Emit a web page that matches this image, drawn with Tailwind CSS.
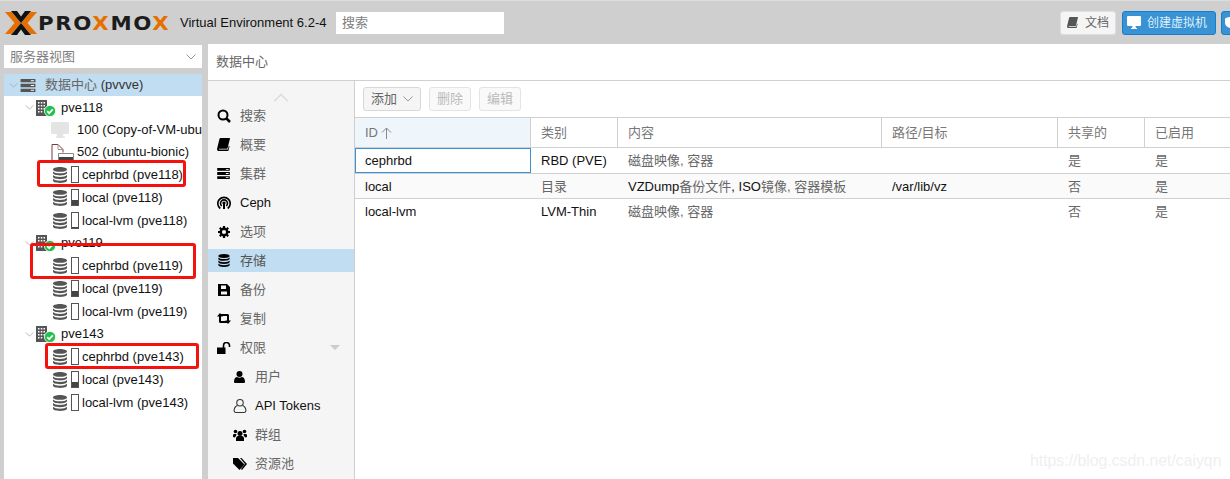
<!DOCTYPE html>
<html lang="zh">
<head>
    <meta charset="UTF-8">
    <title>Proxmox VE</title>
    <script src="https://cdn.jsdelivr.net/npm/@tailwindcss/browser@4"></script>
</head>
<body class="w-[1230px] h-[479px] overflow-hidden relative bg-[#cfcfcf] text-[13px] leading-[16px] text-[#111] font-['Liberation_Sans','Noto_Sans_CJK_SC',sans-serif]">
    <!-- icon sprites -->
    <svg class="hidden">
        <symbol id="db" viewBox="0 0 14 16"><path d="M7 0C3 0 0 1 0 2.400S3 4.800 7 4.800s7-1 7-2.400S11 0 7 0zM0 4.400V6c0 1.400 3 2.400 7 2.400s7-1 7-2.400V4.400C13 5.700 10.300 6.300 7 6.300S1 5.700 0 4.400zm0 3.700v1.700c0 1.400 3 2.400 7 2.400s7-1 7-2.400V8.100C13 9.400 10.300 10 7 10S1 9.400 0 8.100zm0 3.700v1.800C0 15 3 16 7 16s7-1 7-2.400v-1.800c-1 1.300-3.700 1.900-7 1.900s-6-.6-7-1.900z"/></symbol>
        <symbol id="servers" viewBox="0 0 16 14"><path d="M0 0h16v3.600H0zM0 5.200h16v3.600H0zM0 10.400h16V14H0z"/><path fill="#fff" d="M11 1.300h3.500v1H11zM11 6.500h3.500v1H11zM11 11.700h3.500v1H11z"/></symbol>
        <symbol id="node" viewBox="0 0 14 16"><path fill="#555" d="M0 0h11v16H0z"/><path fill="#fff" d="M2 2h1.500v1.500H2zM4.800 2h1.500v1.500H4.800zM7.500 2H9v1.500H7.500zM2 5h1.500v1.500H2zM4.800 5h1.500v1.500H4.800zM7.500 5H9v1.500H7.500zM2 8h1.500v1.500H2zM4.800 8h1.500v1.500H4.800zM7.500 8H9v1.500H7.500zM2 11h1.500v1.500H2zM4.800 11h1.500v1.500H4.800z"/></symbol>
        <symbol id="ok" viewBox="0 0 12 12"><circle cx="6" cy="6" r="5.600" fill="#21bf4b" stroke="#fff" stroke-width=".8"/><path d="M3.200 6.200l2 2 3.600-3.800" fill="none" stroke="#fff" stroke-width="1.700"/></symbol>
        <symbol id="chev" viewBox="0 0 10 6"><path d="M.5.500 5 5 9.500.5" fill="none" stroke="currentColor"/></symbol>
        <symbol id="book" viewBox="0 0 14 14"><path d="M4 0h9.500c.5 0 .5.500.4 1l-2.400 9.500c-.2.800-.6 1-1.300 1H2.500c-.7 0-1 .8.200 .8h9l1-4 .8.500-1.300 5.200H2.300C.5 14-.3 12.800.2 11L2.600 1.200C2.800.4 3.300 0 4 0z"/></symbol>
    </svg>

    <!-- top bar -->
    <header class="h-[44px] flex items-center border-t border-[#dcdcdc] pl-[5px]">
        <svg class="w-[32px] h-[24px] shrink-0" viewBox="0 0 32 24"><path fill="#e57000" d="M0 1h6.500L16 12 6.500 23H0l9.500-11zM32 1h-6.500L16 12l9.500 11H32l-9.500-11z"/><path fill="#111" d="M6 0h6l4 5.500L20 0h6l-10 12zM6 24h6l4-5.500 4 5.500h6L16 12z"/></svg>
        <div class="ml-[1px] w-[139px] shrink-0 origin-left scale-x-[1.12] font-['DejaVu_Sans',sans-serif] font-bold text-[19px] tracking-[1.500px] text-[#1c1c1c] whitespace-nowrap">PRO<span class="text-[#e57000]">X</span>MO<span class="text-[#e57000]">X</span></div>
        <div class="ml-[3px] w-[156px] shrink-0 whitespace-nowrap">Virtual Environment 6.2-4</div>
        <div class="w-[168px] h-[22px] bg-white pl-[6px] leading-[22px] text-[#808080]">搜索</div>
        <div class="ml-auto flex items-center">
            <div class="h-[24px] w-[56px] flex items-center justify-center gap-[7px] rounded-[3px] bg-[#f5f5f5] border border-[#e0e0e0] text-[#666] text-[12px]">
                <svg class="w-[11px] h-[11px] text-[#555] fill-current"><use href="#book"/></svg>文档
            </div>
            <div class="ml-[6px] h-[24px] w-[94px] flex items-center gap-[6px] pl-[4px] rounded-[3px] bg-[#3892d4] border border-[#157fcc] text-[#dff0fb] text-[12px]">
                <svg class="w-[14px] h-[13px] fill-white" viewBox="0 0 14 13"><path fill-rule="evenodd" d="M1 0h12a1 1 0 0 1 1 1v8a1 1 0 0 1-1 1H8.500l.5 2h1v1H4v-1h1l.5-2H1a1 1 0 0 1-1-1V1a1 1 0 0 1 1-1z"/></svg>创建虚拟机
            </div>
            <div class="ml-[5px] h-[24px] w-[20px] -mr-[11px] rounded-[3px] bg-[#3892d4] border border-[#157fcc] flex items-center pl-[3px]">
                <svg class="w-[9px] h-[11px] fill-white" viewBox="0 0 9 11"><path d="M0 1.500C1.500.5 3 .5 4.500 0 6 .5 7.500.5 9 1.500V6c0 2-2 4-4.500 5C2 10 0 8 0 6z"/></svg>
            </div>
        </div>
    </header>

    <div class="flex h-[435px]">
        <!-- resource tree -->
        <aside class="w-[198px] ml-[4px] shrink-0 flex flex-col">
            <div class="h-[23px] mt-[1px] bg-white flex items-center justify-between pl-[6px] pr-[6px] text-[#7f7f7f]">
                服务器视图
                <svg class="w-[10px] h-[6px] text-[#999]"><use href="#chev"/></svg>
            </div>
            <div class="mt-[6px] flex-1 bg-white whitespace-nowrap overflow-hidden">
                <div class="h-[22px] bg-[#c1ddf1] flex items-center pl-[5px]">
                    <svg class="w-[9px] h-[5px] text-[#aaa]"><use href="#chev"/></svg>
                    <svg class="w-[16px] h-[13px] ml-[2px] fill-[#555]"><use href="#servers"/></svg>
                    <span class="ml-[9px] text-[#333]"><span class="text-[#666]">数据中心</span> (pvvve)</span>
                </div>
                <div class="h-[23px] flex items-center pl-[21px]">
                    <svg class="w-[9px] h-[5px] text-[#aaa]"><use href="#chev"/></svg>
                    <span class="relative ml-[2px] w-[14px] h-[16px]"><svg class="w-[14px] h-[16px]"><use href="#node"/></svg><svg class="absolute left-[8px] top-[5px] w-[12px] h-[12px]"><use href="#ok"/></svg></span>
                    <span class="ml-[11px]">pve118</span>
                </div>
                <div class="h-[22px] flex items-center pl-[47px]">
                    <svg class="w-[19px] h-[16px] shrink-0" viewBox="0 0 19 16"><path fill="#e4e4e4" fill-rule="evenodd" d="M1 0h16a1 1 0 0 1 1 1v10a1 1 0 0 1-1 1h-5l.5 2.500H14V16H5v-1.500h.5L6 12H1a1 1 0 0 1-1-1V1a1 1 0 0 1 1-1z"/></svg>
                    <span class="ml-[7px]">100 (Copy-of-VM-ubu</span>
                </div>
                <div class="h-[22px] flex items-center pl-[47px]">
                    <svg class="w-[25px] h-[17px] shrink-0" viewBox="0 0 25 17"><path d="M1 16.500V.5h6l5 5v3" fill="none" stroke="#7a3a3a"/><path d="M7 .5v5h5" fill="none" stroke="#999"/><path fill="#fff" stroke="#888" d="M7.500 9.500h15v7h-15z"/><path fill="#444" d="M8 13h14v3.500H8z"/></svg>
                    <span class="ml-[1px]">502 (ubuntu-bionic)</span>
                </div>
                <div class="h-[23px] flex items-center pl-[49px]">
                    <svg class="w-[14px] h-[16px] fill-[#555]"><use href="#db"/></svg>
                    <span class="ml-[4px] w-[8px] h-[17px] border border-[#555]"></span>
                    <span class="ml-[3px]">cephrbd (pve118)</span>
                </div>
                <div class="h-[23px] flex items-center pl-[49px]">
                    <svg class="w-[14px] h-[16px] fill-[#555]"><use href="#db"/></svg>
                    <span class="ml-[4px] w-[8px] h-[17px] border border-[#555] flex items-end"><span class="w-full h-[5px] bg-[#444]"></span></span>
                    <span class="ml-[3px]">local (pve118)</span>
                </div>
                <div class="h-[23px] flex items-center pl-[49px]">
                    <svg class="w-[14px] h-[16px] fill-[#555]"><use href="#db"/></svg>
                    <span class="ml-[4px] w-[8px] h-[17px] border border-[#555] flex items-end"><span class="w-full h-[1px] bg-[#444]"></span></span>
                    <span class="ml-[3px]">local-lvm (pve118)</span>
                </div>
                <div class="h-[22px] flex items-center pl-[21px]">
                    <svg class="w-[9px] h-[5px] text-[#aaa]"><use href="#chev"/></svg>
                    <span class="relative ml-[2px] w-[14px] h-[16px]"><svg class="w-[14px] h-[16px]"><use href="#node"/></svg><svg class="absolute left-[8px] top-[5px] w-[12px] h-[12px]"><use href="#ok"/></svg></span>
                    <span class="ml-[11px]">pve119</span>
                </div>
                <div class="h-[23px] flex items-center pl-[49px]">
                    <svg class="w-[14px] h-[16px] fill-[#555]"><use href="#db"/></svg>
                    <span class="ml-[4px] w-[8px] h-[17px] border border-[#555]"></span>
                    <span class="ml-[3px]">cephrbd (pve119)</span>
                </div>
                <div class="h-[23px] flex items-center pl-[49px]">
                    <svg class="w-[14px] h-[16px] fill-[#555]"><use href="#db"/></svg>
                    <span class="ml-[4px] w-[8px] h-[17px] border border-[#555] flex items-end"><span class="w-full h-[5px] bg-[#444]"></span></span>
                    <span class="ml-[3px]">local (pve119)</span>
                </div>
                <div class="h-[23px] flex items-center pl-[49px]">
                    <svg class="w-[14px] h-[16px] fill-[#555]"><use href="#db"/></svg>
                    <span class="ml-[4px] w-[8px] h-[17px] border border-[#555]"></span>
                    <span class="ml-[3px]">local-lvm (pve119)</span>
                </div>
                <div class="h-[22px] flex items-center pl-[21px]">
                    <svg class="w-[9px] h-[5px] text-[#aaa]"><use href="#chev"/></svg>
                    <span class="relative ml-[2px] w-[14px] h-[16px]"><svg class="w-[14px] h-[16px]"><use href="#node"/></svg><svg class="absolute left-[8px] top-[5px] w-[12px] h-[12px]"><use href="#ok"/></svg></span>
                    <span class="ml-[11px]">pve143</span>
                </div>
                <div class="h-[23px] flex items-center pl-[49px]">
                    <svg class="w-[14px] h-[16px] fill-[#555]"><use href="#db"/></svg>
                    <span class="ml-[4px] w-[8px] h-[17px] border border-[#555]"></span>
                    <span class="ml-[3px]">cephrbd (pve143)</span>
                </div>
                <div class="h-[23px] flex items-center pl-[49px]">
                    <svg class="w-[14px] h-[16px] fill-[#555]"><use href="#db"/></svg>
                    <span class="ml-[4px] w-[8px] h-[17px] border border-[#555] flex items-end"><span class="w-full h-[5px] bg-[#444]"></span></span>
                    <span class="ml-[3px]">local (pve143)</span>
                </div>
                <div class="h-[23px] flex items-center pl-[49px]">
                    <svg class="w-[14px] h-[16px] fill-[#555]"><use href="#db"/></svg>
                    <span class="ml-[4px] w-[8px] h-[17px] border border-[#555]"></span>
                    <span class="ml-[3px]">local-lvm (pve143)</span>
                </div>
            </div>
        </aside>

        <!-- content -->
        <main class="ml-[6px] flex-1 bg-white flex flex-col min-w-0">
            <div class="h-[37px] flex items-center pl-[8px] border-b border-[#d0d0d0] text-[#666]">数据中心</div>
            <div class="flex flex-1 min-h-0">
                <!-- config nav -->
                <nav class="w-[147px] shrink-0 bg-[#f5f5f5] border-r border-[#cfcfcf] overflow-hidden">
                    <div class="h-[21px] flex justify-center items-end">
                        <svg class="w-[16px] h-[9px] text-[#dcdcdc] rotate-180" viewBox="0 0 10 6"><use href="#chev"/></svg>
                    </div>
                    <div class="h-[28px] flex items-center pl-[9px]">
                        <svg class="w-[14px] h-[14px]" viewBox="0 0 14 14"><circle cx="6" cy="6" r="4.500" fill="none" stroke="#000" stroke-width="2"/><path d="M9.500 9.500 13 13" stroke="#000" stroke-width="2.500"/></svg>
                        <span class="ml-[9px] text-[#666]">搜索</span>
                    </div>
                    <div class="h-[29px] flex items-center pl-[9px]">
                        <svg class="w-[13px] h-[13px]"><use href="#book"/></svg>
                        <span class="ml-[10px] text-[#666]">概要</span>
                    </div>
                    <div class="h-[29px] flex items-center pl-[9px]">
                        <svg class="w-[13px] h-[11px]"><use href="#servers"/></svg>
                        <span class="ml-[10px] text-[#666]">集群</span>
                    </div>
                    <div class="h-[29px] flex items-center pl-[9px]">
                        <svg class="w-[14px] h-[14px]" viewBox="0 0 14 14" fill="none" stroke="#000"><path stroke-width="1.600" d="M3.300 12.500a6.200 6.200 0 1 1 7.400 0"/><path stroke-width="1.600" d="M4.700 10a3.500 3.500 0 1 1 4.600 0"/><circle cx="7" cy="7" r="1.600" fill="#000" stroke="none"/><path stroke-width="2" d="M7 8v5"/></svg>
                        <span class="ml-[9px]">Ceph</span>
                    </div>
                    <div class="h-[29px] flex items-center pl-[10px]">
                        <svg class="w-[12px] h-[12px]" viewBox="0 0 12 12"><circle cx="6" cy="6" r="3.300" fill="none" stroke="#000" stroke-width="2.400"/><path stroke="#000" stroke-width="2.200" d="M6 0v12M0 6h12M1.800 1.800l8.400 8.400M10.200 1.800l-8.400 8.400" stroke-dasharray="2 8"/></svg>
                        <span class="ml-[10px] text-[#666]">选项</span>
                    </div>
                    <div class="h-[23px] my-[3px] flex items-center pl-[10px] bg-[#c1ddf1]">
                        <svg class="w-[12px] h-[13px]"><use href="#db"/></svg>
                        <span class="ml-[10px] text-[#555]">存储</span>
                    </div>
                    <div class="h-[29px] flex items-center pl-[10px]">
                        <svg class="w-[12px] h-[12px]" viewBox="0 0 12 12"><path fill-rule="evenodd" d="M0 0h9l3 3v9H0zM3 1.500V5h5V1.500zM3 7.500v3h6v-3z"/></svg>
                        <span class="ml-[10px] text-[#666]">备份</span>
                    </div>
                    <div class="h-[29px] flex items-center pl-[9px]">
                        <svg class="w-[14px] h-[11px]" viewBox="0 0 14 11"><path d="M3 0l3 3.500H4V8h5l1.500 2H3.500C2.700 10 2 9.300 2 8.500v-5H0zM11 11 8 7.500h2V3H5L3.500 1h7c.8 0 1.500.7 1.500 1.500v5h2z"/></svg>
                        <span class="ml-[9px] text-[#666]">复制</span>
                    </div>
                    <div class="h-[29px] flex items-center pl-[9px] pr-[14px]">
                        <svg class="w-[14px] h-[12px]" viewBox="0 0 14 12"><path d="M0 5.500h8.500V12H0z"/><path d="M6.500 6V3.500a3 3 0 0 1 6 0V5" fill="none" stroke="#000" stroke-width="1.600"/></svg>
                        <span class="ml-[9px] text-[#666]">权限</span>
                        <svg class="ml-auto w-[10px] h-[5px] fill-[#ccc]" viewBox="0 0 10 5"><path d="M0 0h10L5 5z"/></svg>
                    </div>
                    <div class="h-[29px] flex items-center pl-[26px]">
                        <svg class="w-[11px] h-[12px]" viewBox="0 0 11 12"><circle cx="5.500" cy="3" r="3"/><path d="M1 12c-1 0-1-.8-1-1.500C0 8 1.500 6 3 6c1.500 1 3.500 1 5 0 1.500 0 3 2 3 4.500 0 .7 0 1.500-1 1.500z"/></svg>
                        <span class="ml-[10px] text-[#666]">用户</span>
                    </div>
                    <div class="h-[29px] flex items-center pl-[25px]">
                        <svg class="w-[14px] h-[14px]" viewBox="0 0 12 13" fill="none" stroke="#333"><circle cx="6" cy="3.500" r="3"/><path d="M3.500 6C1.500 7 .5 9 .5 11c0 1 .5 1.500 1.500 1.500h8c1 0 1.500-.5 1.500-1.500 0-2-1-4-3-5"/></svg>
                        <span class="ml-[8px]">API Tokens</span>
                    </div>
                    <div class="h-[29px] flex items-center pl-[25px]">
                        <svg class="w-[14px] h-[12px]" viewBox="0 0 14 12"><circle cx="7" cy="4.500" r="2.500"/><circle cx="2.500" cy="2.500" r="1.800"/><circle cx="11.500" cy="2.500" r="1.800"/><path d="M3 12V9.500C3 8 4 7 5 7h4c1 0 2 1 2 2.500V12zM0 8V6.500C0 5.500.5 5 1.500 5h2C3 6 3 6.500 3.300 7 2.500 7.300 2 8 2 8.500zM14 8V6.500c0-1-.5-1.500-1.500-1.500h-2c.5 1 .5 1.500.2 2 .8.300 1.300 1 1.300 1.500z"/></svg>
                        <span class="ml-[8px] text-[#666]">群组</span>
                    </div>
                    <div class="h-[29px] flex items-center pl-[25px]">
                        <svg class="w-[14px] h-[12px]" viewBox="0 0 14 12"><path d="M0 0h5l6.500 6.500L6.500 12 0 5.500z"/><path d="M7 0h1.500L14 6l-5 6-1-1 4-5z"/></svg>
                        <span class="ml-[8px] text-[#666]">资源池</span>
                    </div>
                </nav>

                <!-- storage grid -->
                <section class="flex-1 min-w-0 flex flex-col overflow-hidden">
                    <div class="h-[37px] flex items-center gap-[8px] pl-[8px] border-b border-[#d0d0d0] text-[#bbb]">
                        <div class="w-[58px] h-[24px] flex items-center justify-center gap-[6px] rounded-[3px] bg-[#f5f5f5] border border-[#d8d8d8] text-[#666]">添加<svg class="w-[10px] h-[6px] text-[#999]"><use href="#chev"/></svg></div>
                        <div class="w-[42px] h-[24px] flex items-center justify-center rounded-[3px] bg-[#f9f9f9] border border-[#e4e4e4]">删除</div>
                        <div class="w-[42px] h-[24px] flex items-center justify-center rounded-[3px] bg-[#f9f9f9] border border-[#e4e4e4]">编辑</div>
                    </div>
                    <div class="grid grid-cols-[176px_87px_264px_176px_87px_1fr] h-[30px] border-b border-[#d0d0d0] text-[#777] items-stretch">
                        <div class="bg-[#eef5fb] border-r border-[#d0d0d0] pl-[10px] flex items-center gap-[3px]">ID <svg class="w-[11px] h-[12px]" viewBox="0 0 11 12" fill="none" stroke="#888"><path d="M5.500 12V1M1 5.500 5.500 1 10 5.500"/></svg></div>
                        <div class="border-r border-[#d0d0d0] pl-[10px] flex items-center">类别</div>
                        <div class="border-r border-[#d0d0d0] pl-[10px] flex items-center">内容</div>
                        <div class="border-r border-[#d0d0d0] pl-[10px] flex items-center">路径/目标</div>
                        <div class="border-r border-[#d0d0d0] pl-[10px] flex items-center">共享的</div>
                        <div class="pl-[10px] flex items-center">已启用</div>
                    </div>
                    <div class="grid grid-cols-[176px_87px_264px_176px_87px_1fr] h-[26px] border-b border-[#d0d0d0] items-center">
                        <div class="h-[25px] border border-[#3892d4] pl-[9px] leading-[23px]">cephrbd</div>
                        <div class="pl-[10px] pt-[1px]">RBD (PVE)</div>
                        <div class="pl-[10px] pt-[1px] text-[#666]">磁盘映像, 容器</div>
                        <div></div>
                        <div class="pl-[10px] pt-[1px] text-[#666]">是</div>
                        <div class="pl-[10px] pt-[1px] text-[#666]">是</div>
                    </div>
                    <div class="grid grid-cols-[176px_87px_264px_176px_87px_1fr] h-[25px] border-b border-[#d0d0d0] bg-[#fafafa] items-center pt-[1px]">
                        <div class="pl-[10px]">local</div>
                        <div class="pl-[10px] text-[#666]">目录</div>
                        <div class="pl-[10px] whitespace-nowrap">VZDump<span class="text-[#666]">备份文件</span>, ISO<span class="text-[#666]">镜像, 容器模板</span></div>
                        <div class="pl-[10px]">/var/lib/vz</div>
                        <div class="pl-[10px] text-[#666]">否</div>
                        <div class="pl-[10px] text-[#666]">是</div>
                    </div>
                    <div class="grid grid-cols-[176px_87px_264px_176px_87px_1fr] h-[25px] items-center">
                        <div class="pl-[10px]">local-lvm</div>
                        <div class="pl-[10px]">LVM-Thin</div>
                        <div class="pl-[10px] text-[#666]">磁盘映像, 容器</div>
                        <div></div>
                        <div class="pl-[10px] text-[#666]">否</div>
                        <div class="pl-[10px] text-[#666]">是</div>
                    </div>
                </section>
            </div>
        </main>
    </div>

    <!-- red annotation boxes and the blog watermark sit over the screenshot -->
    <div class="absolute left-[37px] top-[160px] w-[149px] h-[27px] border-[3px] border-[#f5120c] rounded-[3px]"></div>
    <div class="absolute left-[30px] top-[243px] w-[166px] h-[36px] border-[3px] border-[#f5120c] rounded-[3px]"></div>
    <div class="absolute left-[45px] top-[343px] w-[154px] h-[26px] border-[3px] border-[#f5120c] rounded-[3px]"></div>
    <div class="absolute left-[1030px] top-[452px] text-[15.800px] leading-[18px] text-[#efefef]">https://blog.csdn.net/caiyqn</div>
</body>
</html>
